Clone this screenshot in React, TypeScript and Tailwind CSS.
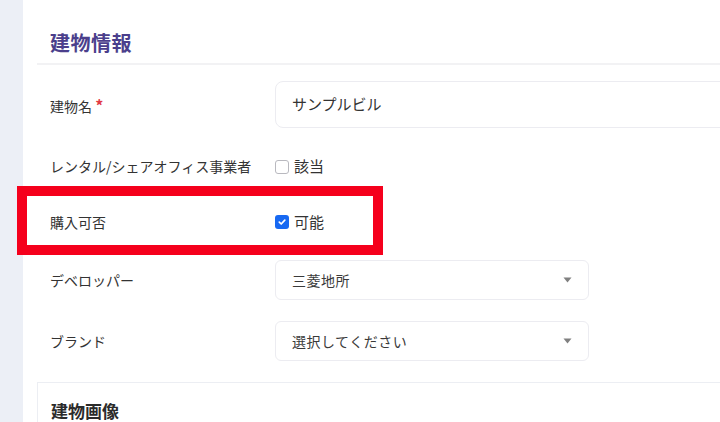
import type { FC, ReactNode } from 'react'

const font = { fontFamily: '"Noto Sans CJK JP", "Noto Sans", sans-serif' }

const Row: FC<{ label: ReactNode; height: string; children: ReactNode }> = ({ label, height, children }) => (
    <div className={`flex items-center ${height}`}>
        <div className="w-[225px] shrink-0 text-[14px] text-[#333333]">{label}</div>
        <div className="flex-1 flex items-center h-full">{children}</div>
    </div>
)

const Checkbox: FC<{ checked?: boolean; label: string }> = ({ checked, label }) => (
    <label className="flex items-center gap-[5px] text-[14px] text-[#333333]">
        {checked ? (
            <span className="w-[14px] h-[14px] rounded-[3px] bg-[#1769f2] flex items-center justify-center">
                <svg width="10" height="10" viewBox="0 0 10 10" fill="none">
                    <path d="M2.3 5.2 L4.2 7 L7.8 3.2" stroke="white" strokeWidth="1.7" strokeLinecap="round" strokeLinejoin="round" />
                </svg>
            </span>
        ) : (
            <span className="w-[14px] h-[14px] rounded-[3px] border border-[#b9b9bf] bg-white"></span>
        )}
        <span className="text-[15px]">{label}</span>
    </label>
)

const Select: FC<{ value: string }> = ({ value }) => (
    <div className="w-[314px] h-full rounded-[6px] border border-[#ececf1] bg-white flex items-center justify-between pl-[16px] pr-[16px]">
        <span className="text-[14px] text-[#3a3a3a] tracking-[0.5px]">{value}</span>
        <svg width="9" height="6" viewBox="0 0 9 6">
            <path d="M0.5 0.5 H8.5 L4.5 5.5 Z" fill="#808080" />
        </svg>
    </div>
)

export default function App() {
    return (
        <div className="relative flex w-[720px] h-[422px] overflow-hidden bg-white" style={font}>
            {/* sidebar strip */}
            <div className="w-[23px] shrink-0 bg-[#eceff6]"></div>

            <div className="flex-1 pl-[14px]">
                {/* 建物情報 card */}
                <div className="bg-white">
                    <div className="h-[65px] pt-[22px] pl-[13px] flex items-center border-b-2 border-[#f2f2f4]">
                        <h2 className="text-[20px] font-bold text-[#4b3f8c] tracking-[0.5px]">建物情報</h2>
                    </div>

                    <div className="pl-[13px] pt-[16px] flex flex-col gap-[21px]">
                        <Row
                            height="h-[47px]"
                            label={<span>建物名 <span className="text-[16px] font-bold text-[#e23b45]">*</span></span>}
                        >
                            <div className="flex-1 h-full -mr-[20px] rounded-[8px] border border-[#ececf1] flex items-center pl-[16px] text-[15px] text-[#333333]">
                                サンプルビル
                            </div>
                        </Row>
                        <Row height="h-[35px]" label="レンタル/シェアオフィス事業者">
                            <Checkbox label="該当" />
                        </Row>
                        <Row height="h-[34px]" label="購入可否">
                            <Checkbox checked label="可能" />
                        </Row>
                        <Row height="h-[40px]" label="デベロッパー">
                            <Select value="三菱地所" />
                        </Row>
                        <Row height="h-[40px]" label="ブランド">
                            <Select value="選択してください" />
                        </Row>
                    </div>
                </div>

                {/* 建物画像 card */}
                <div className="mt-[21px] border-t border-l border-[#eceef3] pl-[13px] pt-[15px] h-[80px]">
                    <h3 className="text-[17px] font-bold text-[#2b2b2b]">建物画像</h3>
                </div>
            </div>

            {/* red annotation box */}
            <div className="absolute left-[17px] top-[186px] w-[366px] h-[69px] border-[10px] border-[#f5001c] pointer-events-none"></div>
        </div>
    )
}
